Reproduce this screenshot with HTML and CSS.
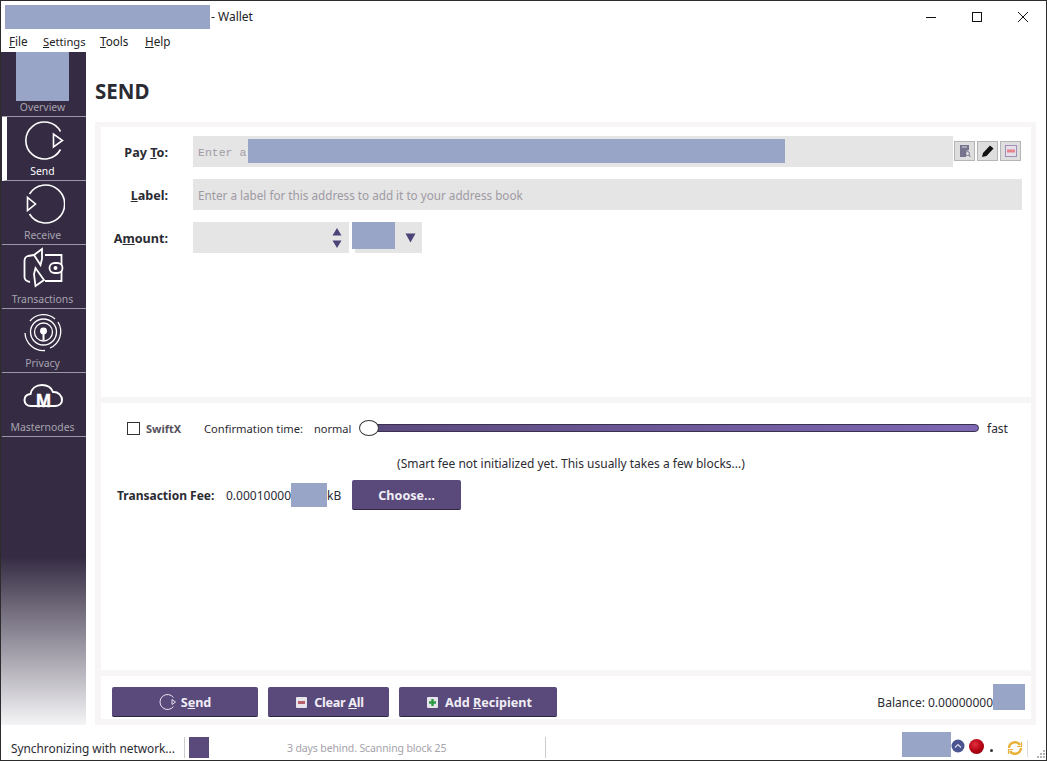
FILE: index.html
```html
<!DOCTYPE html>
<html lang="en">
<head>
<meta charset="utf-8">
<title>Wallet</title>
<link rel="stylesheet" href="styles.css">
</head>
<body>
<div class="window">
  <header class="titlebar">
    <div class="redact title-redact"></div>
    <span class="title-text">- Wallet</span>
    <div class="controls">
      <svg class="ctl" width="46" height="20" viewBox="0 0 46 20"><path d="M18 10.5h10" stroke="#111" fill="none"/></svg>
      <svg class="ctl" width="46" height="20" viewBox="0 0 46 20"><rect x="18.5" y="5.5" width="9" height="9" stroke="#111" fill="none"/></svg>
      <svg class="ctl" width="46" height="20" viewBox="0 0 46 20"><path d="M18 5l10 10M28 5L18 15" stroke="#111" fill="none"/></svg>
    </div>
  </header>
  <nav class="menubar">
    <span class="m-file"><u>F</u>ile</span><span class="m-settings"><u>S</u>ettings</span><span class="m-tools"><u>T</u>ools</span><span><u>H</u>elp</span>
  </nav>
  <div class="body">
    <aside class="sidebar">
      <div class="nav-item first">
        <div class="redact overview-redact"></div>
        <span class="nav-label">Overview</span>
      </div>
      <div class="nav-item active">
        <svg class="nav-icon" width="44" height="44" viewBox="0 0 44 44" fill="none" stroke="#fff" stroke-width="1.6">
          <path d="M39.500 12.500A18.500 18.500 0 1 0 39.500 30.500"/>
          <path d="M32.500 15V28L41.500 21.500Z"/>
        </svg>
        <span class="nav-label">Send</span>
      </div>
      <div class="nav-item">
        <svg class="nav-icon" width="44" height="44" viewBox="0 0 44 44" fill="none" stroke="#fff" stroke-width="1.6">
          <path d="M8.500 11A19 19 0 1 1 8.500 31"/>
          <path d="M6.500 14.500V27.500L14.500 21Z"/>
        </svg>
        <span class="nav-label">Receive</span>
      </div>
      <div class="nav-item">
        <svg class="nav-icon" width="44" height="44" viewBox="0 0 44 44" fill="none" stroke="#fff" stroke-width="1.8">
          <path d="M13 8L7 9Q3.500 10 3.500 14V30Q3.500 34 9 35"/>
          <path d="M24 8H40.500V34H24"/>
          <path d="M21 2L13 8 19.500 18 21 12Z"/>
          <path d="M14.500 39L23 33 14.500 21 13 27Z"/>
          <rect x="28.500" y="16" width="13" height="10" rx="5" fill="#352c43"/>
          <circle cx="34.500" cy="21" r="2" fill="#fff" stroke="none"/>
        </svg>
        <span class="nav-label">Transactions</span>
      </div>
      <div class="nav-item">
        <svg class="nav-icon" width="44" height="44" viewBox="0 0 44 44" fill="none" stroke="#fff" stroke-width="1.300">
          <path d="M9 10A17.500 17.500 0 0 1 34 8"/>
          <path d="M37 11A18 18 0 0 1 29 37"/>
          <path d="M4 22A18.500 18.500 0 0 0 24 39.500"/>
          <circle cx="22.500" cy="21" r="13"/>
          <circle cx="22.500" cy="21" r="9"/>
          <circle cx="22.500" cy="20" r="2.800" fill="#fff"/>
          <path d="M22.500 21v8" stroke-width="2"/>
        </svg>
        <span class="nav-label">Privacy</span>
      </div>
      <div class="nav-item">
        <svg class="nav-icon" width="44" height="44" viewBox="0 0 44 44">
          <path d="M10 31C6 31 3.500 28.500 3.500 25 3.500 21.500 6 19.500 9.500 19 10.500 13.500 15 10 21 10 26.500 10 30.500 13 32 17 37 16.500 41 20.500 41 25 41 28.500 38 31 34 31Z" fill="none" stroke="#fff" stroke-width="2"/>
          <text class="m-logo" x="22.500" y="32" text-anchor="middle">M</text>
        </svg>
        <span class="nav-label">Masternodes</span>
      </div>
    </aside>
    <main class="main">
      <h1 class="page-title">SEND</h1>
      <div class="panels">
        <section class="panel recipient">
          <div class="field-row">
            <label class="field-label"><span>Pay <u>T</u>o:</span></label>
            <div class="input pay-input">
              <span class="mono">Enter a</span>
              <div class="redact pay-redact"></div>
            </div>
            <div class="tool-btns">
              <button class="tool-btn">
                <svg width="12" height="14" viewBox="0 0 12 14"><path d="M1 1h9v5l-3 1v6H1Z" fill="#76738f"/><path d="M3 3h5" stroke="#ddd"/><circle cx="8.500" cy="9.500" r="2" fill="none" stroke="#76738f"/><path d="M10 11l1.500 2" stroke="#76738f"/></svg>
              </button>
              <button class="tool-btn">
                <svg width="14" height="14" viewBox="0 0 14 14"><path d="M1 13l1-4 7-7.500 3.500 3L5.500 12Z" fill="#111"/></svg>
              </button>
              <button class="tool-btn">
                <svg width="14" height="14" viewBox="0 0 14 14"><rect x="1.500" y="1.500" width="11" height="11" fill="#e4dfe8" stroke="#a090b8"/><rect x="3" y="5.500" width="8" height="3" fill="#e4828f"/></svg>
              </button>
            </div>
          </div>
          <div class="field-row">
            <label class="field-label"><span><u>L</u>abel:</span></label>
            <div class="input label-input">Enter a label for this address to add it to your address book</div>
          </div>
          <div class="field-row">
            <label class="field-label"><span>A<u>m</u>ount:</span></label>
            <div class="input amount-input">
              <div class="spin">
                <svg width="10" height="22" viewBox="0 0 10 22"><path d="M5 1l4.500 7.500H.5ZM.5 13.500h9L5 21Z" fill="#4c4478"/></svg>
              </div>
            </div>
            <div class="input unit-combo">
              <div class="redact unit-redact"></div>
              <svg class="combo-arrow" width="11" height="10" viewBox="0 0 11 10"><path d="M.5.5h10L5.500 9.500Z" fill="#4c4478"/></svg>
            </div>
          </div>
        </section>
        <section class="panel fee">
          <div class="conf-row">
            <span class="check"></span>
            <span class="swiftx">SwiftX</span>
            <span class="conf-label">Confirmation time:</span>
            <span class="conf-normal">normal</span>
            <div class="slider"><span class="track"></span><span class="handle"></span></div>
            <span class="conf-fast">fast</span>
          </div>
          <p class="smart-note">(Smart fee not initialized yet. This usually takes a few blocks...)</p>
          <div class="fee-row">
            <strong class="fee-label">Transaction Fee:</strong>
            <span class="fee-value">0.00010000</span>
            <div class="redact fee-redact"></div>
            <span class="fee-unit">kB</span>
            <button class="btn choose">Choose...</button>
          </div>
        </section>
        <section class="panel actions">
          <button class="btn send-btn">
            <svg width="18" height="18" viewBox="0 0 18 18" fill="none" stroke="#e6e2ee"><path d="M14.500 4.500A7.500 7.500 0 1 0 14.500 13.500"/><path d="M13 6.500V11.500L16.500 9Z"/></svg>
            <span>S<u>e</u>nd</span>
          </button>
          <button class="btn clear-btn">
            <svg width="11" height="11" viewBox="0 0 11 11"><rect width="11" height="11" rx="1" fill="#e8e4ec"/><rect x="2" y="4" width="7" height="3" fill="#b8616b"/></svg>
            <span>Clear <u>A</u>ll</span>
          </button>
          <button class="btn add-btn">
            <svg width="11" height="11" viewBox="0 0 11 11"><rect width="11" height="11" rx="1" fill="#e8e4ec"/><path d="M5.500 2v7M2 5.500h7" stroke="#2f9a45" stroke-width="2.400"/></svg>
            <span>Add <u>R</u>ecipient</span>
          </button>
          <div class="balance">
            <span>Balance: 0.00000000</span>
            <div class="redact balance-redact"></div>
          </div>
        </section>
      </div>
    </main>
  </div>
  <footer class="statusbar">
    <span class="sync">Synchronizing with network...</span>
    <span class="status-square"></span>
    <span class="behind">3 days behind. Scanning block 25</span>
    <div class="tray">
      <div class="redact tray-redact"></div>
      <svg class="up-icon" width="14" height="14" viewBox="0 0 14 14"><circle cx="7" cy="7" r="6.500" fill="#4a5590"/><path d="M4 8.500L7 5.500 10 8.500" fill="none" stroke="#dde" stroke-width="1.200"/></svg>
      <span class="red-dot"></span>
      <span class="dot"></span>
      <svg class="sync-icon" width="16" height="16" viewBox="0 0 16 16" fill="none" stroke="#e8b23a" stroke-width="2.400"><path d="M2 8A6 6 0 0 1 13 5"/><path d="M14 8A6 6 0 0 1 3 11"/><path d="M14.500 2v4.500H10M1.500 14V9.500H6" stroke-width="1.200"/></svg>
      <span class="grip">
        <svg width="10" height="10" viewBox="0 0 10 10" fill="#b5b5b5"><rect x="7" y="1" width="2" height="2"/><rect x="4" y="4" width="2" height="2"/><rect x="7" y="4" width="2" height="2"/><rect x="1" y="7" width="2" height="2"/><rect x="4" y="7" width="2" height="2"/><rect x="7" y="7" width="2" height="2"/></svg>
      </span>
    </div>
  </footer>
</div>
</body>
</html>
```
FILE: styles.css
```css
* { box-sizing: border-box; }
html, body { margin: 0; padding: 0; }
body {
  width: 1047px;
  height: 761px;
  overflow: hidden;
  font-family: "Noto Sans", "DejaVu Sans", sans-serif;
  font-size: 12px;
  color: #2b2b33;
  background: #fff;
}
button { font-family: inherit; }
u { text-underline-offset: 1px; }

.window {
  width: 1047px;
  height: 761px;
  display: flex;
  flex-direction: column;
  border: 1px solid #2c2c2c;
  background: #fff;
}
.redact { background: #98a5c6; flex: none; }

/* title bar */
.titlebar {
  height: 31px;
  flex: none;
  display: flex;
  align-items: center;
  padding-left: 4px;
}
.title-redact { width: 205px; height: 24px; }
.title-text { margin-left: 1px; color: #222; }
.controls { margin-left: auto; display: flex; }
.ctl { display: block; }

/* menu */
.menubar {
  height: 20px;
  flex: none;
  display: flex;
  align-items: center;
  padding: 0 0 2px 8px;
  font-size: 11.700px;
  color: #222;
}
.m-file { width: 34px; }
.m-settings { width: 57px; font-size: 11.200px; }
.m-tools { width: 45px; }

.body { flex: 1; display: flex; min-height: 0; }

/* sidebar */
.sidebar {
  width: 85px;
  flex: none;
  display: flex;
  flex-direction: column;
  background: linear-gradient(#352c43 0, #352c43 75%, #f4f4f6 100%);
}
.nav-item {
  height: 64px;
  flex: none;
  display: flex;
  flex-direction: column;
  align-items: center;
  justify-content: flex-end;
  border-bottom: 1px solid #9d98a6;
  margin-left: 1px;
  padding: 0 3px 2px 0;
}
.nav-item.first { height: 65px; justify-content: flex-start; padding-bottom: 0; }
.nav-item.active { border-left: 5px solid #fff; }
.nav-item.active .nav-label { color: #fff; margin-right: 5px; }
.nav-item.active .nav-icon { margin-right: 5px; }
.overview-redact { width: 53px; height: 49px; }
.nav-label { font-size: 10.400px; line-height: 13px; color: #a7a3af; white-space: nowrap; }
.nav-icon { display: block; margin-bottom: 2px; }
.m-logo { font-family: "Liberation Sans", sans-serif; font-weight: bold; font-size: 18px; fill: #fff; stroke: #fff; stroke-width: 0.4px; }

/* main */
.main {
  flex: 1;
  min-width: 0;
  display: flex;
  flex-direction: column;
  padding: 0 10px 0 9px;
}
.page-title {
  height: 70px;
  flex: none;
  margin: 0;
  padding-top: 27px;
  font-size: 20.500px;
  line-height: 24px;
  font-weight: bold;
  color: #2b2b33;
}
.panels {
  flex: 1;
  min-height: 0;
  display: flex;
  flex-direction: column;
  gap: 6px;
  padding: 5px 5px 6px 6px;
  background: #f7f5f6;
}
.panel { background: #fff; }
.recipient {
  height: 270px;
  flex: none;
  padding: 9px 9px 0 0;
  display: flex;
  flex-direction: column;
  gap: 12px;
}
.field-row { display: flex; height: 31px; flex: none; align-items: flex-start; }
.field-label {
  width: 92px;
  height: 31px;
  flex: none;
  display: flex;
  align-items: center;
  justify-content: flex-end;
  padding: 1px 25px 0 0;
  font-size: 12.600px;
  font-weight: bold;
  color: #2b2b33;
}
.input {
  height: 31px;
  background: #e5e5e5;
  display: flex;
  align-items: center;
  padding: 1px 0 0 5px;
  font-size: 11.700px;
  color: #9e9aa3;
  position: relative;
}
.mono { font-family: "Liberation Mono", monospace; font-size: 11.500px; color: #a09ca6; }
.pay-input { width: 760px; flex: none; }
.pay-redact { position: absolute; left: 55px; top: 3px; width: 537px; height: 24px; }
.tool-btns { display: flex; gap: 2px; margin-left: 1px; margin-top: 5px; }
.tool-btn {
  width: 21px;
  height: 20px;
  padding: 0;
  display: flex;
  align-items: center;
  justify-content: center;
  background: #dedede;
  border: 1px solid #b5b5b5;
}
.label-input { flex: 1; }
.amount-input { width: 156px; flex: none; justify-content: flex-end; padding-right: 7px; }
.spin { display: flex; }
.spin svg { display: block; }
.unit-combo { width: 67px; margin-left: 6px; flex: none; padding: 0 6px 0 0; justify-content: flex-end; }
.unit-redact { position: absolute; left: -3px; top: 0; width: 43px; height: 27px; }
.combo-arrow { display: block; }

/* fee */
.fee { flex: 1; min-height: 0; padding: 0; }
.conf-row {
  display: flex;
  align-items: center;
  height: 22px;
  margin-top: 14px;
  padding-left: 26px;
}
.check { width: 13px; height: 13px; border: 1px solid #333; background: #fff; flex: none; }
.swiftx { margin-left: 6px; width: 58px; font-size: 11px; font-weight: bold; color: #56525c; }
.conf-label { width: 110px; font-size: 11.200px; white-space: nowrap; }
.conf-normal { width: 45px; font-size: 11px; }
.slider {
  width: 620px;
  height: 18px;
  flex: none;
  position: relative;
}
.track {
  position: absolute;
  left: 11px;
  right: 0;
  top: 5px;
  height: 8px;
  border-radius: 4px;
  border: 1px solid #3a3050;
  background: linear-gradient(90deg, #5a4a7c, #7e67b4);
}
.handle {
  position: absolute;
  left: 0;
  top: 1px;
  width: 20px;
  height: 16px;
  border-radius: 50%;
  background: #fff;
  border: 1px solid #3a3a3a;
}
.conf-fast { margin-left: 8px; }
.smart-note { margin: 17px 0 0; height: 16px; line-height: 16px; text-align: center; padding-left: 10px; }
.fee-row { display: flex; align-items: center; height: 30px; margin-top: 8px; padding-left: 16px; }
.fee-label { width: 109px; }
.fee-value { width: 65px; white-space: nowrap; }
.fee-redact { width: 36px; height: 24px; }
.fee-unit { width: 25px; }
.btn {
  height: 30px;
  display: flex;
  align-items: center;
  justify-content: center;
  gap: 7px;
  padding: 1px 0 0;
  background: #5a4a7c;
  color: #f0edf5;
  border: 0;
  border-bottom: 1px solid #2d2540;
  border-radius: 2px;
  font-size: 12.600px;
  font-weight: bold;
}
.choose { width: 109px; }

/* actions */
.actions {
  height: 43px;
  flex: none;
  display: flex;
  align-items: flex-start;
  gap: 10px;
  padding: 11px 6px 0 11px;
}
.send-btn { width: 146px; gap: 4px; }
.clear-btn { width: 121px; letter-spacing: -0.3px; padding-left: 3px; }
.add-btn { width: 158px; padding-left: 3px; }
.balance { margin-left: auto; display: flex; align-items: flex-end; height: 24px; margin-top: -1px; }
.balance span { white-space: nowrap; margin-bottom: -1px; }
.balance-redact { width: 32px; height: 26px; }

/* status */
.statusbar {
  height: 35px;
  flex: none;
  display: flex;
  align-items: flex-end;
  padding: 0 0 2px 10px;
}
.sync { width: 174px; font-size: 11.850px; white-space: nowrap; border-right: 1px solid #ccc; height: 21px; line-height: 22px; }
.status-square { width: 20px; height: 21px; margin-left: 4px; background: #5a4a7c; flex: none; }
.behind { margin-left: 78px; width: 259px; color: #a5a2aa; font-size: 10.500px; letter-spacing: -0.12px; height: 21px; line-height: 22px; border-right: 1px solid #ccc; white-space: nowrap; }
.tray { margin-left: auto; margin-bottom: 1px; height: 25px; display: flex; align-items: flex-end; }
.tray-redact { width: 49px; height: 25px; }
.up-icon { margin-bottom: 4px; }
.red-dot { width: 15px; height: 15px; margin: 0 0 3px 4px; border-radius: 50%; background: radial-gradient(circle at 40% 35%, #e03040, #b00010 55%, #700008); flex: none; }
.dot { width: 3px; height: 3px; border-radius: 50%; background: #333; margin: 0 0 5px 6px; flex: none; }
.sync-icon { margin: 0 0 1px 14px; }
.grip { width: 19px; height: 17px; flex: none; margin-left: 4px; border-left: 1px solid #ddd; display: flex; align-items: flex-end; justify-content: flex-end; }
.grip svg { display: block; margin-bottom: -2px; }
```
